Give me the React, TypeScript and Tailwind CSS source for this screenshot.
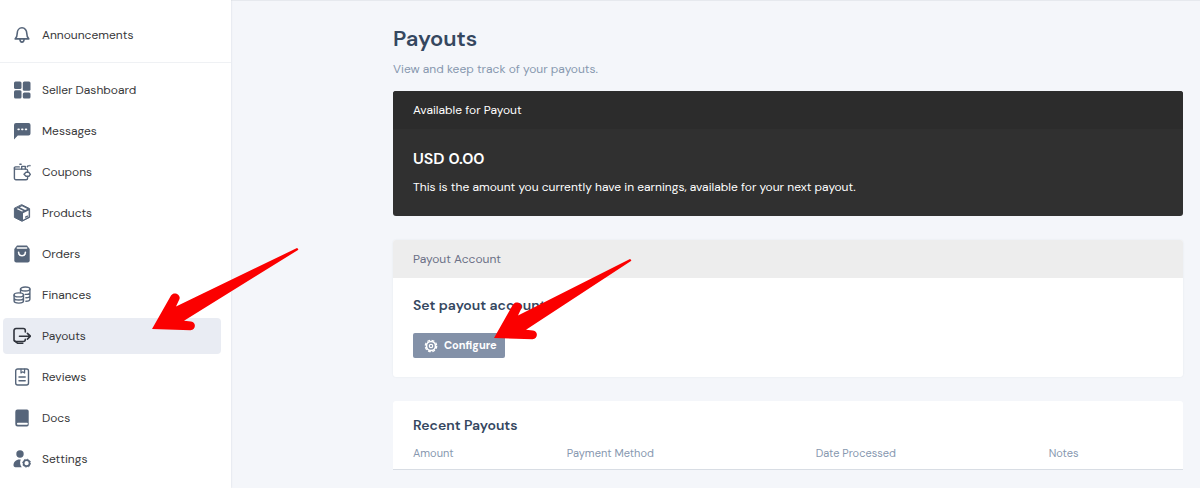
import type { ReactNode } from 'react';

type NavEntry = {
  label: string;
  icon: ReactNode;
  active?: boolean;
};

function Icon({ children }: { children: ReactNode }) {
  return (
    <svg
      viewBox="0 0 18 18"
      className="h-[18px] w-[18px] shrink-0"
      fill="none"
      stroke="currentColor"
      strokeWidth="1.4"
      strokeLinecap="round"
      strokeLinejoin="round"
      aria-hidden="true"
    >
      {children}
    </svg>
  );
}

const bellIcon = (
  <Icon>
    <path d="M2.2 12.9h13.6c-1.5-1.3-2-2.4-2-5.3C13.8 4.4 11.8 1.8 9 1.8S4.2 4.4 4.2 7.6c0 2.9-.5 4-2 5.3z" strokeWidth="1.6" />
    <path d="M6.9 13.2c.1 1.9.9 2.9 2.1 2.9s2-1 2.1-2.9" strokeWidth="1.6" />
  </Icon>
);

const NAV: NavEntry[] = [
  {
    label: 'Seller Dashboard',
    icon: (
      <Icon>
        <g fill="currentColor" stroke="none">
          <rect x="1" y="0.5" width="7.5" height="7.5" rx="1.5" />
          <rect x="9.8" y="0.5" width="7.7" height="9.2" rx="1.5" />
          <rect x="1" y="9.3" width="7.5" height="8.2" rx="1.5" />
          <rect x="9.8" y="11.5" width="7.7" height="6" rx="1.5" />
        </g>
      </Icon>
    ),
  },
  {
    label: 'Messages',
    icon: (
      <Icon>
        <path
          d="M3 1h12.5a2 2 0 0 1 2 2v8.5a2 2 0 0 1-2 2H4.8L1 17.5V3a2 2 0 0 1 2-2z"
          fill="currentColor"
          stroke="none"
        />
        <path d="M5.2 7.3h.8M8.9 7.3h.8M12.6 7.3h.8" stroke="#fff" strokeWidth="1.7" />
      </Icon>
    ),
  },
  {
    label: 'Coupons',
    icon: (
      <Icon>
        <path d="M14.6 8.4v-.8a1.5 1.5 0 0 0-1.5-1.5H2.5A1.1 1.1 0 0 1 1.4 5v10.3a1.5 1.5 0 0 0 1.5 1.5h10.2a1.5 1.5 0 0 0 1.5-1.5v-.9" />
        <path d="M1.4 5a1.1 1.1 0 0 1 1.1-1.1h3.8M8.7 6V3.4h3.6V6" />
        <path d="M13 9.3h2.9l1.4 2-1.4 2H13l-2-2z" />
        <path d="M6.9 1.3h1.2M14.3 3.7l.9-.9M16.9 2.6v.2" strokeWidth="1.5" />
      </Icon>
    ),
  },
  {
    label: 'Products',
    icon: (
      <Icon>
        <path d="M9 .8l7.6 3.8v8.8L9 17.3l-7.6-3.9V4.6z" fill="currentColor" strokeWidth="1" />
        <path d="M10 9.3l5.6-2.9v6.4L10 15.7z" fill="#fff" stroke="none" />
        <path d="M3.6 4.9L9 7.6l1.3-.7L5 4.2zM6.7 3.3l5.4 2.7 2.2-1.1L9 2.2z" fill="#fff" stroke="none" />
        <path d="M12.6 13.1l1.9-1" strokeWidth="1.2" />
      </Icon>
    ),
  },
  {
    label: 'Orders',
    icon: (
      <Icon>
        <path
          d="M4 .5h10L16.7 4v11.5a2 2 0 0 1-2 2H3.3a2 2 0 0 1-2-2V4z"
          fill="currentColor"
          stroke="none"
        />
        <path d="M4.3 3h9.4" stroke="#fff" strokeWidth="1.3" />
        <path d="M5.6 7.3c.3 4.6 6.5 4.6 6.8 0" stroke="#fff" strokeWidth="1.6" />
      </Icon>
    ),
  },
  {
    label: 'Finances',
    icon: (
      <Icon>
        <g strokeWidth="1.4">
          <ellipse cx="12.2" cy="3" rx="4.7" ry="2" />
          <path d="M7.5 3v3.5M16.9 3v10.2c0 1-1.6 1.9-4 2M16.9 6.4c0 1.1-2 2-4.7 2M16.9 9.8c0 1.1-1.6 1.9-4 2" />
          <ellipse cx="5.8" cy="8.9" rx="4.7" ry="2" />
          <path d="M1.1 8.9v6.2c0 1.1 2 2 4.7 2s4.7-.9 4.7-2V8.9M1.1 12c0 1.1 2 2 4.7 2s4.7-.9 4.7-2" />
        </g>
      </Icon>
    ),
  },
  {
    label: 'Payouts',
    active: true,
    icon: (
      <Icon>
        <g strokeWidth="1.6">
          <path d="M12.3 5V3.5a2 2 0 0 0-2-2H3a2 2 0 0 0-2 2v9a2 2 0 0 0 2 2h7.3a2 2 0 0 0 2-2v-.2" />
          <path d="M6.5 9.2h10.8M14.4 6.3l3 2.9-3 2.9M1.5 13.8l3 2.4h5.3" />
        </g>
      </Icon>
    ),
  },
  {
    label: 'Reviews',
    icon: (
      <Icon>
        <rect x="2.7" y="1" width="12.8" height="16" rx="2" />
        <path d="M8 1v4l1.8-1.2L11.6 5V1" strokeWidth="1.2" />
        <path d="M6 9h6.2M6 12.8h6.2" />
      </Icon>
    ),
  },
  {
    label: 'Docs',
    icon: (
      <Icon>
        <path
          d="M4.5.5H14a1.7 1.7 0 0 1 1.7 1.7v13.6a1.7 1.7 0 0 1-1.7 1.7H4.5a2.2 2.2 0 0 1-2.2-2.2V2.7A2.2 2.2 0 0 1 4.5.5z"
          fill="currentColor"
          stroke="none"
        />
        <path d="M4.9 14.7h9" stroke="#fff" strokeWidth="1.9" />
      </Icon>
    ),
  },
  {
    label: 'Settings',
    icon: (
      <Icon>
        <circle cx="7" cy="4" r="3.7" fill="currentColor" stroke="none" />
        <path
          d="M7.8 9.5c-4.3-.6-7.3 1.9-7.3 5.8 0 1.1.7 1.9 1.8 1.9h6.5c-1.9-2.2-2.2-5.2-1-7.7z"
          fill="currentColor"
          stroke="none"
        />
        <circle cx="13.6" cy="13.2" r="3" strokeWidth="1.7" />
        <circle cx="13.6" cy="13.2" r="4" strokeWidth="1" strokeDasharray="1.2 1.94" strokeLinecap="butt" />
      </Icon>
    ),
  },
];

function GearIcon() {
  return (
    <svg viewBox="0 0 14 14" className="h-[14px] w-[14px] shrink-0" fill="none" stroke="currentColor" aria-hidden="true">
      <circle cx="7" cy="7" r="4.5" strokeWidth="1.6" />
      <circle cx="7" cy="7" r="5.7" strokeWidth="1.3" strokeDasharray="2.8 1.677" />
      <circle cx="7" cy="7" r="1.7" strokeWidth="1.2" />
    </svg>
  );
}

// tail is the far end of the shaft; the head always points at (2, 82)
function Arrow({ tail, className }: { tail: [number, number]; className: string }) {
  const [x, y] = tail;
  return (
    <svg
      viewBox="0 0 150 88"
      className={`pointer-events-none absolute z-10 h-[88px] w-[150px] ${className}`}
      fill="#fb0000"
      aria-hidden="true"
    >
      <path
        d={`M2 82L21 48.5C24 44 31 47.5 29.5 52L26 59.5L${x - 1} ${y - 1}Q${x + 1} ${y} ${x} ${y + 1}L34 73.8L41 74.5C46.5 75 46 83 40.5 83.2Z`}
      />
    </svg>
  );
}

function NavItem({ label, icon, active }: NavEntry) {
  return (
    <li className="relative">
      <a
        href="#"
        aria-current={active ? 'page' : undefined}
        className={`flex h-9 items-center gap-[11px] rounded pl-[10px] text-xs ${active ? 'bg-[#e9ecf3]' : ''}`}
      >
        <span className={active ? 'text-[#30343d]' : 'text-[#56657a]'}>{icon}</span>
        <span className="text-[#38383a]">{label}</span>
      </a>
      {active ? <Arrow tail={[148, 2]} className="-top-[71px] left-[147px]" /> : null}
    </li>
  );
}

function Sidebar() {
  return (
    <aside className="relative z-10 w-[231px] shrink-0 bg-white shadow-[0_0_2px_rgba(40,60,90,0.15)]">
      <ul className="border-b border-[#eff1f4] pt-[17px] pr-[10px] pb-[9px] pl-[3px]">
        <NavItem label="Announcements" icon={bellIcon} />
      </ul>
      <ul className="flex flex-col gap-[5px] pt-[9px] pr-[10px] pl-[3px]">
        {NAV.map((entry) => (
          <NavItem key={entry.label} {...entry} />
        ))}
      </ul>
    </aside>
  );
}

export default function App() {
  return (
    <div className="flex min-h-screen bg-[#f4f6fa] font-['DM_Sans','Inter',sans-serif]">
      <Sidebar />
      <main className="min-w-0 flex-1 border-t border-[#e6e9ee] pt-6 pr-[17px] pl-[162px]">
        <h1 className="text-[22px] leading-7 font-semibold text-[#35475f]">Payouts</h1>
        <p className="mt-2 text-xs leading-4 text-[#8798af]">View and keep track of your payouts.</p>

        <section className="mt-[14px] overflow-hidden rounded-[3px] bg-[#303030] text-white">
          <h2 className="bg-[#2c2c2c] px-5 py-[11px] text-xs leading-4">Available for Payout</h2>
          <div className="px-5 pt-[18px] pb-[21px]">
            <p className="text-base leading-6 font-semibold">USD 0.00</p>
            <p className="mt-2 text-xs leading-4">
              This is the amount you currently have in earnings, available for your next payout.
            </p>
          </div>
        </section>

        <section className="mt-6 rounded-[3px] bg-white shadow-[0_0_2px_rgba(40,60,90,0.08)]">
          <h2 className="rounded-t-[3px] bg-[#ededed] px-5 py-[11px] text-xs leading-4 text-[#6b7086]">
            Payout Account
          </h2>
          <div className="px-5 pt-[17px] pb-[19px]">
            <h3 className="text-sm leading-5 font-semibold text-[#35475f]">Set payout account</h3>
            <div className="relative mt-[18px] w-fit">
              <button
                type="button"
                className="flex h-[25px] items-center gap-[6px] rounded-[2px] bg-[#8391a8] pr-2 pl-[11px] text-[11px] font-bold text-white"
              >
                <GearIcon />
                Configure
              </button>
              <Arrow tail={[139, 4]} className="-top-[77px] left-[79px]" />
            </div>
          </div>
        </section>

        <section className="mt-6 rounded-t-[3px] border-b border-[#d8dde4] bg-white pt-[14px]">
          <h2 className="px-5 text-sm leading-5 font-semibold text-[#35475f]">Recent Payouts</h2>
          <table className="w-full table-fixed text-left text-[11px] leading-4 text-[#8798af]">
            <thead>
              <tr>
                <th className="w-[22%] pt-[10px] pb-2 pl-5 font-normal">Amount</th>
                <th className="w-[31.5%] pt-[10px] pb-2 font-normal">Payment Method</th>
                <th className="w-[29.5%] pt-[10px] pb-2 font-normal">Date Processed</th>
                <th className="pt-[10px] pb-2 font-normal">Notes</th>
              </tr>
            </thead>
          </table>
        </section>
      </main>
    </div>
  );
}
